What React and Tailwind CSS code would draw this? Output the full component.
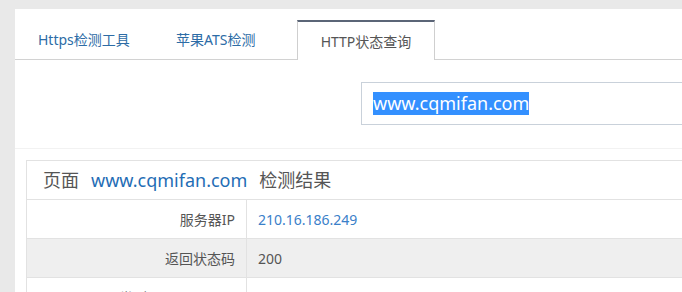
import React from "react";

const FONT = { fontFamily: '"Noto Sans", "Noto Sans CJK SC", sans-serif' };

const tabs = [
  { label: "Https检测工具", width: "w-[138px]" },
  { label: "苹果ATS检测", width: "w-[144px]" },
];

const rows = [
  { label: "服务器IP", value: "210.16.186.249", link: true },
  { label: "返回状态码", value: "200", gray: true },
  { label: "页面类型Content-Type", value: "text/html; charset=utf-8" },
];

export default function App() {
  return (
    <div className="min-h-screen w-[682px] h-[292px] overflow-hidden bg-[#e9e9e9] pl-[15px] pt-[9px]" style={FONT}>
      <div className="w-[760px] bg-white h-[400px]">
        {/* tabs */}
        <div className="flex h-[51px] items-end border-b border-[#d2d2d2] pl-0">
          {tabs.map((t) => (
            <div key={t.label} className={`${t.width} h-[39px] flex items-center pl-[23px] text-[14px] text-[#2d6ca6]`}>
              {t.label}
            </div>
          ))}
          <div className="w-[138px] h-[40px] -mb-px flex items-center justify-center bg-white border-x border-[#cfcfcf] border-t-2 border-t-[#5b6577] text-[14px] text-[#555]">
            HTTP状态查询
          </div>
        </div>

        {/* form */}
        <div className="pt-[22px] pb-[23px] pl-[346px] border-b border-[#f2f2f2]">
          <div className="w-[400px] h-[43px] border border-[#c9d1da] flex items-center pl-[11px]">
            <span className="bg-[#3390ff] text-white text-[18px] leading-[23px]">www.cqmifan.com</span>
          </div>
        </div>

        {/* result table */}
        <div className="pl-[11px] pt-[11px]">
          <div className="border border-[#e2e2e2]">
            <div className="h-[39px] flex items-center pl-[16px] text-[18px] text-[#555] gap-[12px] border-b border-[#e2e2e2]">
              <span>页面</span>
              <span className="text-[#1f6db5]">www.cqmifan.com</span>
              <span>检测结果</span>
            </div>
            {rows.map((r) => (
              <div key={r.label} className={`flex h-[39px] border-b border-[#e2e2e2] text-[14px] ${r.gray ? "bg-[#efefef]" : "bg-white"}`}>
                <div className="w-[220px] flex items-center justify-end pr-[11px] border-r border-[#e2e2e2] text-[#555]">
                  {r.label}
                </div>
                <div className={`flex items-center pl-[11px] ${r.link ? "text-[#3a80c9]" : "text-[#555]"}`}>
                  {r.value}
                </div>
              </div>
            ))}
          </div>
        </div>
      </div>
    </div>
  );
}
